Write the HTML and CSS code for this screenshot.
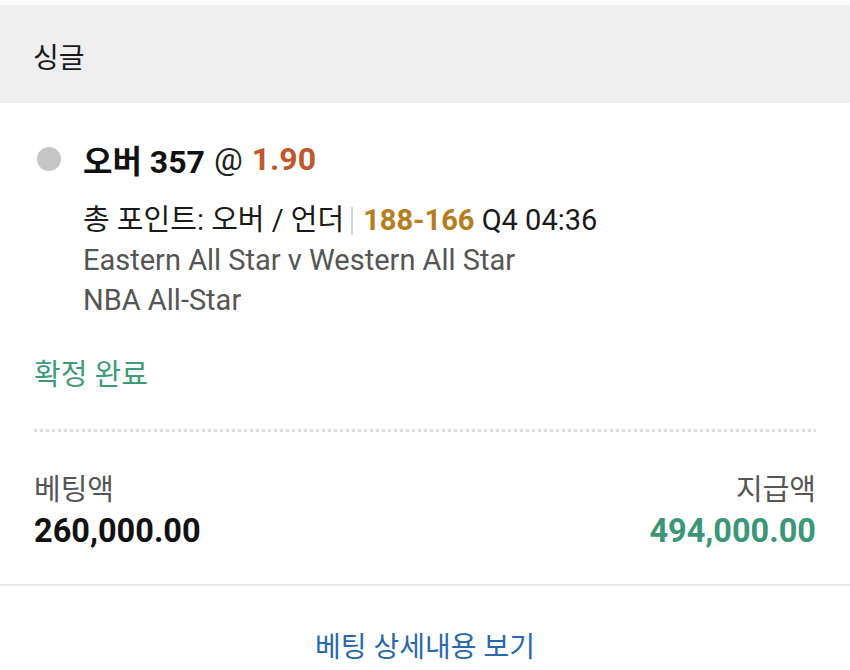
FILE: index.html
```html
<!DOCTYPE html>
<html lang="ko">
<head>
<meta charset="utf-8">
<link rel="stylesheet" href="styles.css">
</head>
<body>
<div class="page">
  <div class="topstrip"></div>
  <header class="head">싱글</header>
  <section class="card">
    <div class="title">
      <span class="dot"></span>
      <span class="sel">오버 357</span>
      <span class="at">@</span>
      <span class="odds">1.90</span>
    </div>
    <div class="details">
      <div class="line market">총 포인트: 오버 / 언더<span class="bar"></span><span class="score">188-166</span> Q4 04:36</div>
      <div class="line muted">Eastern All Star v Western All Star</div>
      <div class="line muted">NBA All-Star</div>
    </div>
    <div class="status">확정 완료</div>
    <div class="dots"></div>
    <div class="amounts">
      <div class="col">
        <div class="label">베팅액</div>
        <div class="value">260,000.00</div>
      </div>
      <div class="col right">
        <div class="label">지급액</div>
        <div class="value win">494,000.00</div>
      </div>
    </div>
  </section>
  <footer class="foot">
    <a class="link">베팅 상세내용 보기</a>
  </footer>
</div>
</body>
</html>
```
FILE: styles.css
```css
* { box-sizing: border-box; }
html, body { margin: 0; padding: 0; background: #fff; }
body {
  font-family: Roboto, "Noto Sans CJK KR", sans-serif;
  color: #111;
  width: 850px;
  height: 670px;
  overflow: hidden;
}
.topstrip { height: 5px; background: #fafafa; }
.head {
  height: 98px;
  background: #efefef;
  display: flex;
  align-items: center;
  padding-left: 33px;
  padding-top: 4px;
  font-size: 28px;
  color: #1a1a1a;
}
.card { padding: 0 34px 0 34px; }
.title {
  display: flex;
  align-items: center;
  height: 60px;
  margin-top: 26px;
  font-size: 32px;
  gap: 9px;
}
.dot {
  width: 24px;
  height: 24px;
  border-radius: 50%;
  background: #c6c6c6;
  margin: 0 13px 0 3px;
}
.sel { font-weight: 700; color: #111; }
.at { color: #222; }
.odds { font-weight: 700; color: #c2572b; }
.details { padding-left: 49px; margin-top: 11px; }
.line {
  font-size: 29px;
  line-height: 40px;
  height: 40px;
  white-space: nowrap;
}
.market { color: #1a1a1a; }
.muted { color: #555; }
.bar {
  display: inline-block;
  width: 2px;
  height: 28px;
  background: #d6d6d6;
  margin: 0 10px 0 7px;
  vertical-align: -5px;
}
.score { font-weight: 700; color: #b57d1d; }
.status {
  margin-top: 35px;
  font-size: 29px;
  line-height: 40px;
  color: #3f9a78;
}
.dots {
  margin-top: 34px;
  height: 3px;
  background-image: linear-gradient(to right, #dcdcdc 50%, transparent 50%);
  background-size: 6px 3px;
  background-repeat: repeat-x;
}
.amounts {
  display: flex;
  justify-content: space-between;
  margin-top: 38px;
  padding-bottom: 32px;
}
.col.right { text-align: right; }
.label { font-size: 29px; line-height: 40px; color: #555; }
.value { font-size: 32.5px; line-height: 42px; font-weight: 700; color: #111; }
.value.win { color: #3b9777; }
.foot {
  border-top: 2px solid #e8e8e8;
  display: flex;
  justify-content: center;
  padding-top: 42px;
}
.link {
  font-size: 28px;
  line-height: 40px;
  color: #2868ad;
}
```
